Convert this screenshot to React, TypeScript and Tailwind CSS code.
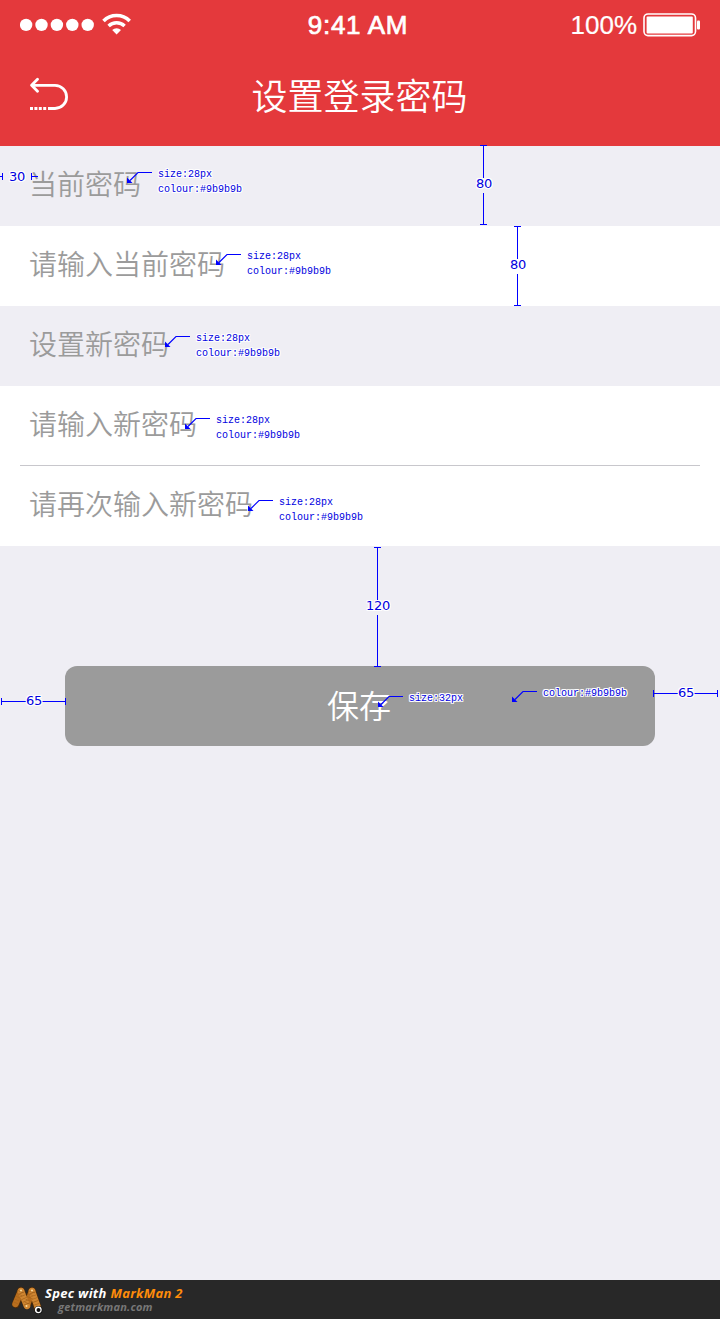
const BLUE = '#0000ff';

const HALO =
  '[text-shadow:1px_0_#fff,-1px_0_#fff,0_1px_#fff,0_-1px_#fff,1px_1px_#fff,-1px_-1px_#fff,1px_-1px_#fff,-1px_1px_#fff]';

function StatusBar() {
  return (
    <div className="flex h-[49px] items-center justify-between pl-5 pr-5">
      <div className="flex w-[200px] items-center">
        <svg width="112" height="24" viewBox="0 0 112 24" fill="#fff">
          <circle cx="6.1" cy="11.9" r="6.2" />
          <circle cx="21.5" cy="11.9" r="6.2" />
          <circle cx="36.9" cy="11.9" r="6.2" />
          <circle cx="52.3" cy="11.9" r="6.2" />
          <circle cx="67.7" cy="11.9" r="6.2" />
          <path d="M83.5 8 A18.5 18.5 0 0 1 109.7 8" fill="none" stroke="#fff" strokeWidth="3.6" />
          <path d="M88.6 13 A11.5 11.5 0 0 1 104.6 13" fill="none" stroke="#fff" strokeWidth="3.4" />
          <path d="M92.2 17 A6.5 6.5 0 0 1 101 17 L96.6 21.4 Z" />
        </svg>
      </div>
      <div className="-ml-1 w-[110px] text-center text-[26px] leading-none font-normal tracking-[0.7px] whitespace-nowrap [-webkit-text-stroke:0.7px_#fff]">
        9:41 AM
      </div>
      <div className="flex w-[200px] items-center justify-end gap-[6px]">
        <span className="pt-px text-[26px] leading-none [-webkit-text-stroke:0.2px_#fff]">100%</span>
        <svg width="57" height="24" viewBox="0 0 57 24">
          <rect x="1" y="1" width="51.5" height="21.6" rx="4" fill="none" stroke="#fff" strokeWidth="1.6" />
          <rect x="3.6" y="3.4" width="46.2" height="17" rx="1" fill="#fff" />
          <rect x="54" y="7.6" width="3" height="9" rx="1" fill="#fff" />
        </svg>
      </div>
    </div>
  );
}

function BackIcon() {
  return (
    <svg width="40" height="34" viewBox="0 0 40 34" fill="none" stroke="#fff" strokeWidth="2.8">
      <path d="M7.5 2.3 L1.6 8.3 L7.5 14.3" strokeLinecap="round" strokeLinejoin="round" />
      <path d="M2 8.3 H25 A11.6 11.6 0 0 1 25 31.5 H18" />
      <path d="M0 31.5 H17" strokeDasharray="3 1.4" />
    </svg>
  );
}

function Row({ text, white, line }: { text: string; white?: boolean; line?: boolean }) {
  return (
    <div className={white ? 'h-20 bg-white px-5' : 'h-20 px-5'}>
      <div
        className={
          line
            ? 'flex h-20 items-center border-b border-[#c8c7cc] pb-[5px] pl-[9px]'
            : 'flex h-20 items-center pb-[6px] pl-[9px]'
        }
      >
        <span className="text-[28px] leading-none text-[#9b9b9b]">{text}</span>
      </div>
    </div>
  );
}

function Callout({ x, y, lines }: { x: number; y: number; lines: string[] }) {
  return (
    <div className="absolute flex" style={{ left: x - 32, top: y - 8 }}>
      <svg width="32" height="20" viewBox="0 0 32 20" className="shrink-0">
        <path d="M26 7.5 H12 L4 15.5" fill="none" stroke={BLUE} strokeWidth="1.1" />
        <path d="M1 12.5 L6.5 18 L1 18 Z" fill={BLUE} />
      </svg>
      <div
        className={`pt-[2px] font-['Liberation_Mono',monospace] text-[10px] leading-[15px] font-normal whitespace-nowrap text-[#0000e0] ${HALO}`}
      >
        {lines.map((l) => (
          <div key={l}>{l}</div>
        ))}
      </div>
    </div>
  );
}

const LABEL = `font-['DejaVu_Sans',sans-serif] font-normal text-[13px] leading-[15px] tracking-[-0.3px] text-[#0000e0] ${HALO}`;

function VMeasure({ x, top, height, label }: { x: number; top: number; height: number; label: string }) {
  return (
    <div className="absolute flex w-[31px] flex-col items-center" style={{ left: x - 15, top, height }}>
      <div className="h-px w-[7px] shrink-0 bg-[#0000ff]" />
      <div className="w-px grow bg-[#0000ff]" />
      <div className={`${LABEL} relative -top-[2px] left-[0.5px]`}>{label}</div>
      <div className="w-px grow bg-[#0000ff]" />
      <div className="h-px w-[7px] shrink-0 bg-[#0000ff]" />
    </div>
  );
}

function HMeasure({ x, y, label }: { x: number; y: number; label: string }) {
  return (
    <div className="absolute flex h-[15px] w-[65px] items-center" style={{ left: x, top: y - 7 }}>
      <div className="h-[7px] w-px bg-[#0000ff]" />
      <div className="h-px grow bg-[#0000ff]" />
      <div className={`${LABEL} relative -top-px left-[0.5px]`}>{label}</div>
      <div className="h-px grow bg-[#0000ff]" />
      <div className="h-[7px] w-px bg-[#0000ff]" />
    </div>
  );
}

function Footer() {
  return (
    <footer className="flex h-[39px] bg-[#282828] pl-[11px]">
      <svg width="34" height="39" viewBox="0 0 34 39" fill="none" strokeLinecap="round">
        <path d="M5 24 L10 11 L16 25 L21 11 L27 29" stroke="#4a2a0a" strokeWidth="8" strokeLinejoin="round" />
        <path d="M4.5 24 L10 11" stroke="#b86e1e" strokeWidth="6.5" />
        <path d="M16 25 L21 11" stroke="#b86e1e" strokeWidth="6.5" />
        <path d="M10 11 L16 26" stroke="#cf8632" strokeWidth="6.5" />
        <path d="M21 11 L27 28" stroke="#cf8632" strokeWidth="6.5" />
        <path
          d="M4.5 23 L10 11 L16 25 L21 11 L27 28"
          stroke="#a5631c"
          strokeWidth="6"
          strokeLinecap="butt"
          strokeDasharray="0.6 2.4"
        />
        <circle cx="10" cy="10.5" r="1" fill="#ffe0a0" />
        <circle cx="21" cy="10.5" r="1" fill="#ffe0a0" />
        <circle cx="15.5" cy="26" r="1" fill="#ffe0a0" />
        <circle cx="27.5" cy="30" r="4" fill="#111" />
        <circle cx="27.3" cy="29.8" r="3.4" fill="#fff" />
        <circle cx="27.5" cy="30" r="2" fill="#111" />
      </svg>
      <div className="pt-[7px] font-['Open_Sans',sans-serif] font-bold whitespace-nowrap italic">
        <div className="text-[13px] leading-[13px] tracking-[0.32px] text-white">
          Spec with <span className="text-[#ff8c0a]">MarkMan 2</span>
        </div>
        <div className="pl-[13px] text-[11px] leading-[13px] tracking-[0.2px] text-[#777]">getmarkman.com</div>
      </div>
    </footer>
  );
}

export default function App() {
  return (
    <div className="relative flex h-[1319px] w-[720px] flex-col overflow-hidden bg-[#efeef4] font-['Noto_Sans_CJK_SC',sans-serif] font-normal">
      <header className="h-[146px] bg-[#e4393c] text-white">
        <div className="font-['Liberation_Sans',sans-serif]">
          <StatusBar />
        </div>
        <div className="flex h-[90px] items-center px-[30px]">
          <div className="w-[100px]">
            <BackIcon />
          </div>
          <h1 className="grow pr-px text-center text-[36px] leading-none font-[350]">设置登录密码</h1>
          <div className="w-[100px]" />
        </div>
      </header>
      <main className="grow font-[350]">
        <Row text="当前密码" />
        <Row text="请输入当前密码" white />
        <Row text="设置新密码" />
        <Row text="请输入新密码" white line />
        <Row text="请再次输入新密码" white />
        <div className="px-[65px] pt-[120px]">
          <button className="flex h-20 w-full items-center justify-center rounded-xl bg-[#9b9b9b] pr-[2px] pb-[5px] text-[32px] leading-none text-white">
            保存
          </button>
        </div>
      </main>
      <Footer />

      <VMeasure x={483} top={145} height={80} label="80" />
      <VMeasure x={517} top={226} height={80} label="80" />
      <VMeasure x={377} top={547} height={120} label="120" />
      <HMeasure x={1} y={701} label="65" />
      <HMeasure x={653} y={693} label="65" />
      <div className="absolute top-[169px] left-0 flex h-[15px] w-[38px] items-center">
        <div className="h-px w-[2px] bg-[#0000ff]" />
        <div className="h-[7px] w-px bg-[#0000ff]" />
        <div className={`${LABEL} w-[28px] text-center`}>30</div>
        <div className="h-[7px] w-px bg-[#0000ff]" />
        <div className="h-px w-[6px] bg-[#0000ff]" />
      </div>

      <Callout x={158} y={173} lines={['size:28px', 'colour:#9b9b9b']} />
      <Callout x={247} y={255} lines={['size:28px', 'colour:#9b9b9b']} />
      <Callout x={196} y={337} lines={['size:28px', 'colour:#9b9b9b']} />
      <Callout x={216} y={419} lines={['size:28px', 'colour:#9b9b9b']} />
      <Callout x={279} y={501} lines={['size:28px', 'colour:#9b9b9b']} />
      <Callout x={409} y={697} lines={['size:32px']} />
      <Callout x={543} y={692} lines={['colour:#9b9b9b']} />
    </div>
  );
}
